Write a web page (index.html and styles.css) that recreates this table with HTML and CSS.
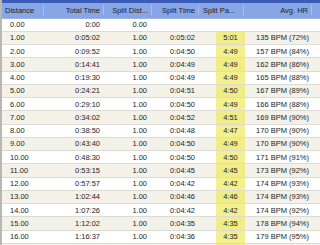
FILE: index.html
```
<!DOCTYPE html>
<html lang="en">
<head>
    <meta charset="UTF-8">
    <title>Splits</title>
    <link rel="stylesheet" href="styles.css">
</head>
<body>
    <div class="grid-view">
        <div class="title-strip"></div>
        <table class="splits">
            <colgroup>
                <col class="c-dist">
                <col class="c-total">
                <col class="c-sdist">
                <col class="c-stime">
                <col class="c-pace">
                <col class="c-hr">
                <col class="c-fill">
            </colgroup>
            <thead>
                <tr>
                    <th class="dist">Distance</th>
                    <th class="num">Total Time</th>
                    <th class="num">Split Dist...</th>
                    <th class="num">Split Time</th>
                    <th class="pace-h">Split Pa...</th>
                    <th class="num">Avg. HR</th>
                    <th class="fill"></th>
                </tr>
            </thead>
            <tbody>
                <tr><td class="dist">0.00</td><td class="num">0:00</td><td class="num sd">0.00</td><td class="num"></td><td class="blank"></td><td class="num hr"></td><td></td></tr>
                <tr><td class="dist">1.00</td><td class="num">0:05:02</td><td class="num sd">1.00</td><td class="num">0:05:02</td><td class="pace">5:01</td><td class="num hr">135 BPM (72%)</td><td></td></tr>
                <tr><td class="dist">2.00</td><td class="num">0:09:52</td><td class="num sd">1.00</td><td class="num">0:04:50</td><td class="pace">4:49</td><td class="num hr">157 BPM (84%)</td><td></td></tr>
                <tr><td class="dist">3.00</td><td class="num">0:14:41</td><td class="num sd">1.00</td><td class="num">0:04:49</td><td class="pace">4:49</td><td class="num hr">162 BPM (86%)</td><td></td></tr>
                <tr><td class="dist">4.00</td><td class="num">0:19:30</td><td class="num sd">1.00</td><td class="num">0:04:49</td><td class="pace">4:49</td><td class="num hr">165 BPM (88%)</td><td></td></tr>
                <tr><td class="dist">5.00</td><td class="num">0:24:21</td><td class="num sd">1.00</td><td class="num">0:04:51</td><td class="pace">4:50</td><td class="num hr">167 BPM (89%)</td><td></td></tr>
                <tr><td class="dist">6.00</td><td class="num">0:29:10</td><td class="num sd">1.00</td><td class="num">0:04:50</td><td class="pace">4:49</td><td class="num hr">166 BPM (88%)</td><td></td></tr>
                <tr><td class="dist">7.00</td><td class="num">0:34:02</td><td class="num sd">1.00</td><td class="num">0:04:52</td><td class="pace">4:51</td><td class="num hr">169 BPM (90%)</td><td></td></tr>
                <tr><td class="dist">8.00</td><td class="num">0:38:50</td><td class="num sd">1.00</td><td class="num">0:04:48</td><td class="pace">4:47</td><td class="num hr">170 BPM (90%)</td><td></td></tr>
                <tr><td class="dist">9.00</td><td class="num">0:43:40</td><td class="num sd">1.00</td><td class="num">0:04:50</td><td class="pace">4:49</td><td class="num hr">170 BPM (90%)</td><td></td></tr>
                <tr><td class="dist">10.00</td><td class="num">0:48:30</td><td class="num sd">1.00</td><td class="num">0:04:50</td><td class="pace">4:50</td><td class="num hr">171 BPM (91%)</td><td></td></tr>
                <tr><td class="dist">11.00</td><td class="num">0:53:15</td><td class="num sd">1.00</td><td class="num">0:04:45</td><td class="pace">4:45</td><td class="num hr">173 BPM (92%)</td><td></td></tr>
                <tr><td class="dist">12.00</td><td class="num">0:57:57</td><td class="num sd">1.00</td><td class="num">0:04:42</td><td class="pace">4:42</td><td class="num hr">174 BPM (93%)</td><td></td></tr>
                <tr><td class="dist">13.00</td><td class="num">1:02:44</td><td class="num sd">1.00</td><td class="num">0:04:46</td><td class="pace">4:46</td><td class="num hr">174 BPM (93%)</td><td></td></tr>
                <tr><td class="dist">14.00</td><td class="num">1:07:26</td><td class="num sd">1.00</td><td class="num">0:04:42</td><td class="pace">4:42</td><td class="num hr">174 BPM (92%)</td><td></td></tr>
                <tr><td class="dist">15.00</td><td class="num">1:12:02</td><td class="num sd">1.00</td><td class="num">0:04:35</td><td class="pace">4:35</td><td class="num hr">178 BPM (94%)</td><td></td></tr>
                <tr><td class="dist">16.00</td><td class="num">1:16:37</td><td class="num sd">1.00</td><td class="num">0:04:36</td><td class="pace">4:35</td><td class="num hr">179 BPM (95%)</td><td></td></tr>
                <tr class="filler"><td></td><td></td><td></td><td></td><td class="pace"></td><td></td><td></td></tr>
            </tbody>
        </table>
    </div>
</body>
</html>
```

FILE: styles.css
```
:root {
    --strip-color: #3a5cb6;
    --header-color: #88a5e6;
    --stripe-color: #f4f1e8;
    --line-color: #dcdcd6;
    --pace-color: #f4f08e;
    --text-color: #1e1e1e;
}

* {
    margin: 0;
    padding: 0;
    box-sizing: border-box;
}

body {
    width: 320px;
    height: 245px;
    overflow: hidden;
    background: #ffffff;
    font-family: 'Liberation Sans', Arial, sans-serif;
    font-size: 7.5px;
    color: var(--text-color);
}

.grid-view {
    border-left: 2px solid #b8b8b0;
}

.title-strip {
    height: 3px;
    background: var(--strip-color);
}

.splits {
    width: 318px;
    table-layout: fixed;
    border-collapse: collapse;
}

.c-dist { width: 43px; }
.c-total { width: 60px; }
.c-sdist { width: 48px; }
.c-stime { width: 47px; }
.c-pace { width: 45px; }
.c-hr { width: 68px; }
.c-fill { width: 7px; }

.splits th {
    height: 15px;
    background: var(--header-color);
    font-weight: 400;
    white-space: nowrap;
    overflow: hidden;
    padding: 0 5px;
    border-bottom: 1px solid #9db3e6;
    background-image: linear-gradient(#a9bff0, #a9bff0);
    background-size: 1px 10px;
    background-repeat: no-repeat;
    background-position: right 1px center;
}

.splits th.fill {
    background-image: none;
}

.splits th.dist {
    text-align: left;
    padding-left: 3px;
}

.splits th.pace-h {
    text-align: left;
    padding-left: 3px;
}

.splits td {
    height: 13.25px;
    white-space: nowrap;
    border-bottom: 1px solid var(--line-color);
    padding: 0 5px;
}

.splits tbody tr:nth-child(even) td {
    background-color: var(--stripe-color);
}

.splits td.dist {
    padding-left: 8px;
}

.num {
    text-align: right;
}

.splits td.sd {
    padding-right: 6px;
}

.splits td.hr {
    padding-right: 4px;
}

.splits td.pace,
.splits td.blank {
    text-align: center;
    padding: 0 0 0 16px;
}

.splits td.pace {
    background-image: linear-gradient(to right, transparent 16px, var(--pace-color) 16px);
}

.splits tbody tr:nth-child(even) td.pace {
    background-image: linear-gradient(to right, transparent 16px, #f0ec86 16px);
}

.splits tr.filler td {
    height: 8px;
    border-bottom: none;
    border-top: 1px solid #c8c8c0;
}
```
